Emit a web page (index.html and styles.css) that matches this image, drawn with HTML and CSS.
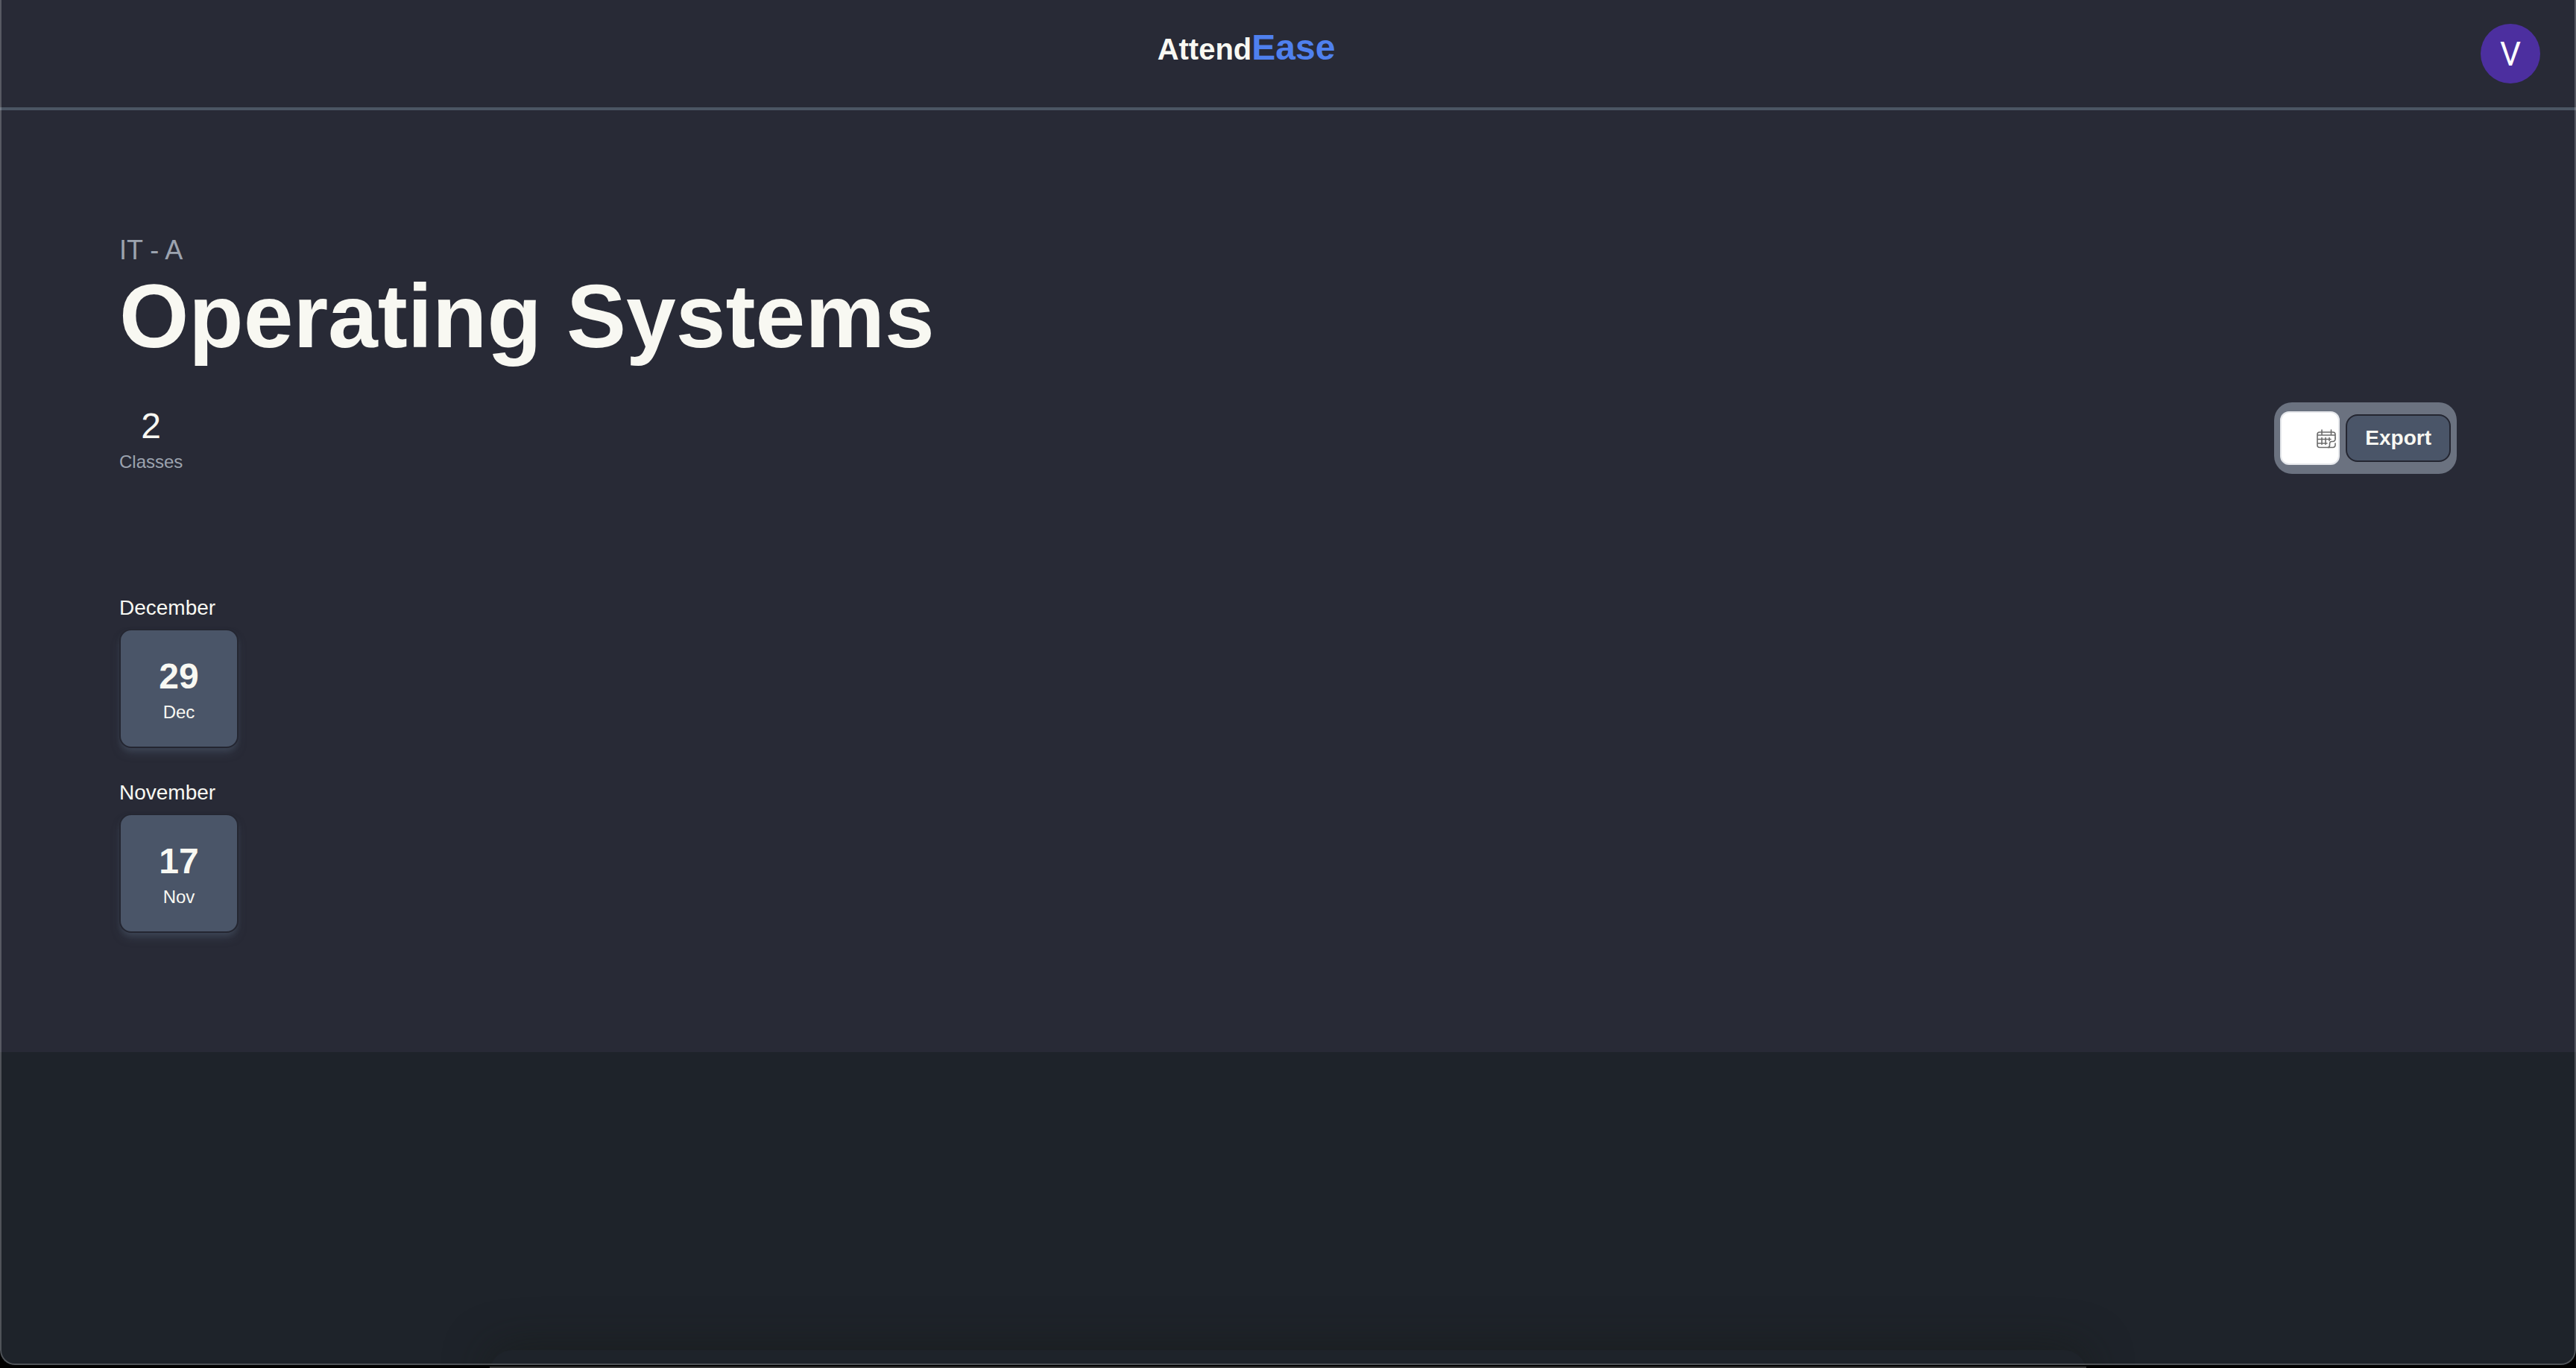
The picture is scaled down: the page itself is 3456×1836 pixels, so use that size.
FILE: index.html
```html
<!DOCTYPE html>
<html lang="en">
<head>
<meta charset="utf-8">
<title>AttendEase</title>
<link rel="stylesheet" href="styles.css">
</head>
<body>
<div class="window">
  <header class="navbar">
    <a class="logo" href="#">Attend<span class="logo-accent">Ease</span></a>
    <button class="avatar" type="button" aria-label="Account">V</button>
  </header>
  <main class="course">
    <p class="section-name">IT - A</p>
    <h1 class="course-name">Operating Systems</h1>
    <div class="summary">
      <div class="stat">
        <span class="stat-value">2</span>
        <span class="stat-label">Classes</span>
      </div>
      <form class="export">
        <label class="date-field">
          <input class="date-input" type="text" aria-label="Date range">
          <svg class="date-icon" viewBox="0 0 26 26" fill="none" stroke="#6b6b6b" stroke-width="1.6" stroke-linecap="round" stroke-linejoin="round" aria-hidden="true">
            <path d="M25 12V7a3 3 0 0 0-3-3H4a3 3 0 0 0-3 3V21.500a3 3 0 0 0 3 3h13M1 8h24M7 1v6M19.500 1v6M1 13.500h18M1 19h13M7 11.500v9M12 11.500v9M17 11.500v4"/>
            <path d="M25 12v1.500a3 3 0 0 1-3 3h-1.500a3 3 0 0 0-3 3v2a3 3 0 0 1-2 3M25 19v2.500a3 3 0 0 1-3 3h-6"/>
          </svg>
        </label>
        <button class="export-button" type="button">Export</button>
      </form>
    </div>
    <div class="months">
      <section class="month">
        <h2 class="month-name">December</h2>
        <a class="day" href="#"><span class="day-number">29</span><span class="day-month">Dec</span></a>
      </section>
      <section class="month">
        <h2 class="month-name">November</h2>
        <a class="day" href="#"><span class="day-number">17</span><span class="day-month">Nov</span></a>
      </section>
    </div>
  </main>
</div>
<div class="dock-edge"></div>
</body>
</html>
```
FILE: styles.css
```css
* {
  box-sizing: border-box;
}

body {
  margin: 0;
  display: flex;
  flex-direction: column;
  min-height: 100vh;
  background: #000;
  color: #f8f8f2;
  font-family: "Liberation Sans", Arial, sans-serif;
}

h1, h2, p {
  margin: 0;
}

a {
  color: inherit;
  text-decoration: none;
}

.window {
  position: relative;
  flex: 1;
  overflow: hidden;
  background: #1e232a;
  border-radius: 0 0 20px 20px;
}

/* Soft shade that the dock casts on the bottom of the window */
.window::before {
  content: "";
  position: absolute;
  left: 19%;
  right: 19%;
  bottom: -40px;
  height: 60px;
  border-radius: 40px;
  box-shadow: 0 0 60px rgba(24, 26, 22, 0.6);
}

.window::after {
  content: "";
  position: absolute;
  inset: 0;
  border: 2px solid rgba(255, 255, 255, 0.22);
  border-top: 0;
  border-radius: inherit;
  pointer-events: none;
}

.dock-edge {
  height: 2px;
  margin: 2px 19% 0;
  background: #3a3a3a;
}

.navbar {
  display: flex;
  align-items: flex-start;
  padding: 32px 48px 32px 16px;
  background: #282a36;
  border-bottom: 4px solid #4b5563;
}

.logo {
  flex: 1;
  text-align: center;
  font-size: 40px;
  line-height: 64px;
  font-weight: 700;
}

.logo-accent {
  color: #4f80ee;
  font-size: 48px;
}

.avatar {
  width: 80px;
  height: 80px;
  padding: 2px 0 0;
  border: 0;
  border-radius: 50%;
  background: #4c2f9f;
  color: #fff;
  font-family: Roboto, sans-serif;
  font-size: 44px;
}

.course {
  padding: 160px;
  background: #282a36;
}

.section-name {
  color: #9ca3af;
  font-size: 36px;
  line-height: 56px;
}

.course-name {
  font-size: 120px;
  line-height: 120px;
}

.summary {
  display: flex;
  justify-content: space-between;
  margin-top: 56px;
}

.stat {
  display: flex;
  flex-direction: column;
  align-items: center;
}

.stat-value {
  font-size: 48px;
  line-height: 64px;
}

.stat-label {
  color: #9ca3af;
  font-size: 24px;
  line-height: 32px;
}

.export {
  display: flex;
  align-items: center;
  gap: 8px;
  padding: 8px;
  border-radius: 24px;
  background: #6b7280;
}

.date-field {
  position: relative;
  display: flex;
}

.date-input {
  width: 80px;
  height: 72px;
  padding: 8px 32px 8px 8px;
  border: 2px solid #e5e7eb;
  border-radius: 12px;
  background: #fff;
  font: inherit;
  font-size: 28px;
}

.date-icon {
  position: absolute;
  top: 24px;
  right: 5px;
  width: 26px;
  height: 26px;
}

.export-button {
  height: 64px;
  padding: 0 24px;
  border: 2px solid #242631;
  border-radius: 16px;
  background: #4a5568;
  color: #f8f8f2;
  font: inherit;
  font-size: 28px;
  font-weight: 700;
}

.months {
  display: grid;
  gap: 40px;
  margin-top: 160px;
}

.month {
  display: grid;
  gap: 8px;
  justify-items: start;
}

.month-name {
  font-size: 28px;
  line-height: 40px;
  font-weight: 400;
}

.day {
  display: flex;
  flex-direction: column;
  align-items: center;
  justify-content: center;
  width: 160px;
  height: 160px;
  border: 2px solid #242631;
  border-radius: 16px;
  background: #4a5568;
  box-shadow: 0 8px 12px -2px rgba(74, 85, 104, 0.5), 0 4px 8px -4px rgba(74, 85, 104, 0.5);
}

.day-number {
  font-size: 48px;
  line-height: 64px;
  font-weight: 700;
}

.day-month {
  font-size: 24px;
  line-height: 32px;
}
```
